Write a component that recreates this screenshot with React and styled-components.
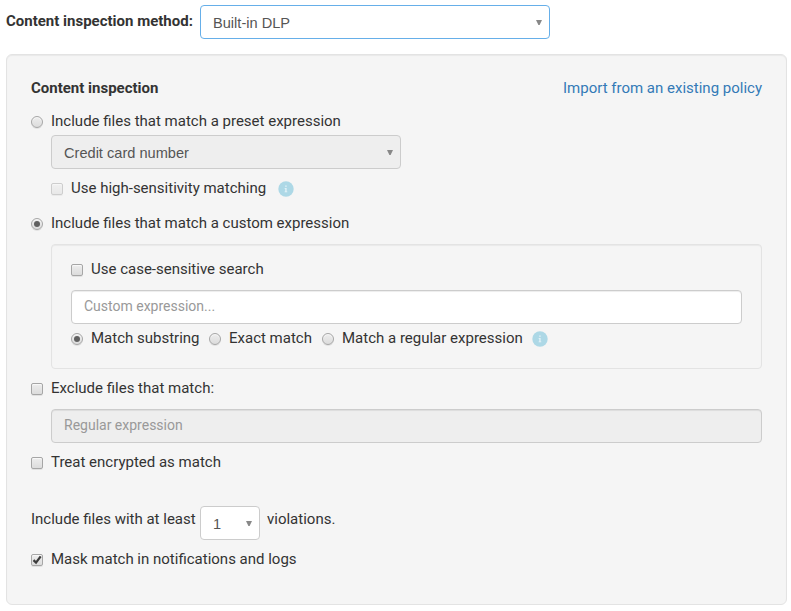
import React from "react";
import styled, { createGlobalStyle, css } from "styled-components";

const GlobalStyle = createGlobalStyle`
  * { box-sizing: border-box; }
  body {
    margin: 0;
    background: #fff;
    color: #333;
    font: 15px/20px Roboto, sans-serif;
  }
`;

const Page = styled.main`
  width: 791px;
  height: 611px;
  padding: 5px 4px 0 6px;
`;

const MethodRow = styled.div`
  display: flex;
  height: 34px;
`;

const MethodLabel = styled.label`
  width: 194px;
  padding-top: 6px;
  font-weight: 700;
  font-size: 15px;
  white-space: nowrap;
`;

const SelectBox = styled.div`
  display: flex;
  align-items: center;
  justify-content: space-between;
  width: ${(p) => p.$width}px;
  height: 34px;
  padding: 2px 7px 0 12px;
  border: 1px solid ${(p) => (p.$focused ? "#66afe9" : "#ccc")};
  border-radius: 4px;
  background: ${(p) => (p.$disabled ? "#eee" : "#fff")};
  color: #555;
  font: 14.6px/20px "Liberation Sans", Arial, sans-serif;
`;

const Arrow = styled.svg`
  display: block;
  width: 6px;
  height: 6px;
  margin-top: -1px;
  fill: #888;
`;

const Panel = styled.section`
  width: 781px;
  height: 551px;
  margin-top: 15px;
  padding: 23px 24px 0;
  border: 1px solid #e3e3e3;
  border-radius: 6px;
  background: #f5f5f5;
  box-shadow: inset 0 1px 1px rgba(0, 0, 0, 0.05);
`;

const Header = styled.header`
  display: flex;
  justify-content: space-between;
  height: 20px;
`;

const Title = styled.h1`
  margin: 0;
  font-size: 15px;
  line-height: 20px;
`;

const ImportLink = styled.a`
  color: #337ab7;
  text-decoration: none;
`;

const Row = styled.div`
  display: flex;
  height: 20px;
  margin-top: ${(p) => p.$gap || 0}px;
  white-space: nowrap;
`;

const Indent = styled.div`
  padding-left: 20px;
  padding-top: ${(p) => p.$gap || 0}px;
`;

const Option = styled.label`
  display: flex;
  width: ${(p) => (p.$width ? `${p.$width}px` : "auto")};
  gap: 8px;
`;

const control = css`
  flex: none;
  display: block;
  width: 12px;
  height: 12px;
  margin-top: 5px;
  opacity: ${(p) => (p.$disabled ? 0.5 : 1)};
  border: 1px solid #a6a6a6;
  background: linear-gradient(#ededed, #dcdcdc);
  box-shadow: 0 1px 0 rgba(0, 0, 0, 0.08), inset 0 1px 1px rgba(255, 255, 255, 0.7);
`;

const RadioMark = styled.span`
  ${control}
  display: grid;
  place-items: center;
  border-radius: 50%;

  &::after {
    content: "";
    width: 6px;
    height: 6px;
    border-radius: 50%;
    background: ${(p) => (p.$checked ? "#606060" : "transparent")};
  }
`;

const CheckMark = styled.span`
  ${control}
  border-radius: 2px;
`;

const Tick = styled.svg`
  display: block;
  width: 10px;
  height: 10px;
  fill: none;
  stroke: #3c3c3c;
  stroke-width: 2.3;
`;

const Info = styled.svg`
  display: block;
  width: 16px;
  height: 16px;
  margin: 3px 0 0 ${(p) => p.$left}px;
`;

const CustomBox = styled.div`
  height: 125px;
  margin-top: 11px;
  padding: 14px 19px 0;
  border: 1px solid #e3e3e3;
  border-radius: 4px;
  background: #f5f5f5;
  box-shadow: inset 0 1px 1px rgba(0, 0, 0, 0.05);
`;

const TextInput = styled.input`
  display: block;
  width: 100%;
  height: 34px;
  margin-top: 11px;
  padding: 5px 12px 7px;
  border: 1px solid #ccc;
  border-radius: 4px;
  outline: 0;
  background: #fff;
  font: 14px/20px Roboto, sans-serif;
  box-shadow: inset 0 1px 1px rgba(0, 0, 0, 0.075);

  &::placeholder { color: #999; opacity: 1; }
  &:disabled { background: #eee; }
`;

const CountRow = styled.div`
  display: flex;
  height: 34px;
  margin-top: 34px;
`;

const CountText = styled.span`
  width: ${(p) => (p.$width ? `${p.$width}px` : "auto")};
  padding: 3px 0 0 ${(p) => p.$left || 0}px;
  white-space: nowrap;
`;

function Select({ value, ...box }) {
  return (
    <SelectBox {...box}>
      <span>{value}</span>
      <Arrow viewBox="0 0 6 6"><path d="M0 0H6L3.6 5H2.4Z" /></Arrow>
    </SelectBox>
  );
}

function Check({ checked, disabled, children }) {
  return (
    <Option>
      <CheckMark $disabled={disabled}>
        {checked && <Tick viewBox="0 0 10 10"><path d="M1.5 5.2L4 7.6L8.7 1.4" /></Tick>}
      </CheckMark>
      <span>{children}</span>
    </Option>
  );
}

function Radio({ checked, width, children }) {
  return (
    <Option $width={width}>
      <RadioMark $checked={checked} />
      <span>{children}</span>
    </Option>
  );
}

function InfoIcon({ left }) {
  return (
    <Info $left={left} viewBox="0 0 16 16">
      <circle cx="8" cy="8" r="7.7" fill="#add8e6" />
      <path d="M7.2 4.5h1.5v1.3H7.2zM6.6 7h2v3.6h.7v.7H6.6v-.7h.7V7.7h-.7z" fill="#e5f3f8" />
    </Info>
  );
}

export default function App() {
  return (
    <>
      <GlobalStyle />
      <Page>
        <MethodRow>
          <MethodLabel>Content inspection method:</MethodLabel>
          <Select $width={350} $focused value="Built-in DLP" />
        </MethodRow>
        <Panel>
          <Header>
            <Title>Content inspection</Title>
            <ImportLink href="#">Import from an existing policy</ImportLink>
          </Header>
          <Row $gap={13}>
            <Radio>Include files that match a preset expression</Radio>
          </Row>
          <Indent $gap={4}>
            <Select $width={350} $disabled value="Credit card number" />
            <Row $gap={9}>
              <Check disabled>Use high-sensitivity matching</Check>
              <InfoIcon left={12} />
            </Row>
          </Indent>
          <Row $gap={15}>
            <Radio checked>Include files that match a custom expression</Radio>
          </Row>
          <Indent>
            <CustomBox>
              <Row>
                <Check>Use case-sensitive search</Check>
              </Row>
              <TextInput placeholder="Custom expression..." />
              <Row $gap={4}>
                <Radio checked width={138}>Match substring</Radio>
                <Radio width={113}>Exact match</Radio>
                <Radio>Match a regular expression</Radio>
                <InfoIcon left={9} />
              </Row>
            </CustomBox>
          </Indent>
          <Row $gap={9}>
            <Check>Exclude files that match:</Check>
          </Row>
          <Indent>
            <TextInput disabled placeholder="Regular expression" />
          </Indent>
          <Row $gap={9}>
            <Check>Treat encrypted as match</Check>
          </Row>
          <CountRow>
            <CountText $width={169}>Include files with at least</CountText>
            <Select $width={60} value="1" />
            <CountText $left={7}>violations.</CountText>
          </CountRow>
          <Row $gap={9}>
            <Check checked>Mask match in notifications and logs</Check>
          </Row>
        </Panel>
      </Page>
    </>
  );
}
